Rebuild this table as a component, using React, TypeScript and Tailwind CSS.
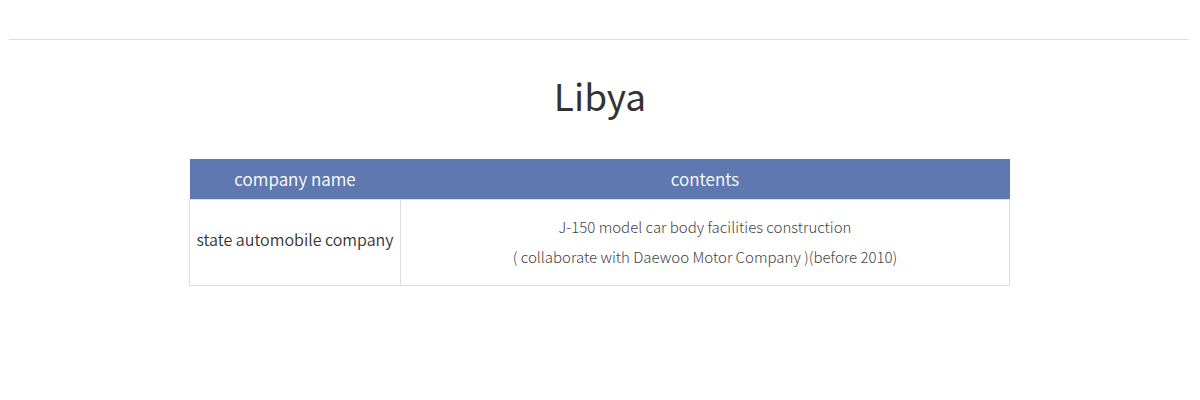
export default function App() {
  return (
    <div className="w-[1200px] h-[400px] bg-white font-['Noto_Sans_CJK_KR','Noto_Sans',sans-serif]">
      <div className="pt-[39px] pl-[9px]">
        <div className="w-[1180px] border-t border-[#dddddd]" />
      </div>
      <h1 className="mt-[30px] text-center text-[37px] leading-[50px] text-[#333333]">Libya</h1>
      <div className="mt-[39px] ml-[189px] w-[821px]">
        <table className="w-full border-collapse">
          <thead>
            <tr className="bg-[#5f79b0] text-white text-[17px]">
              <th className="w-[211px] h-[40px] font-[350]">company name</th>
              <th className="h-[40px] font-[350]">contents</th>
            </tr>
          </thead>
          <tbody>
            <tr>
              <td className="h-[86px] pb-[6px] border border-[#dddddd] text-center text-[16px] font-[350] text-[#333333]">
                state automobile company
              </td>
              <td className="h-[86px] border border-[#dddddd] text-center text-[15px] leading-[30px] font-light text-[#444444]">
                <p>J-150 model car body facilities construction</p>
                <p>( collaborate with Daewoo Motor Company )(before 2010)</p>
              </td>
            </tr>
          </tbody>
        </table>
      </div>
    </div>
  );
}
